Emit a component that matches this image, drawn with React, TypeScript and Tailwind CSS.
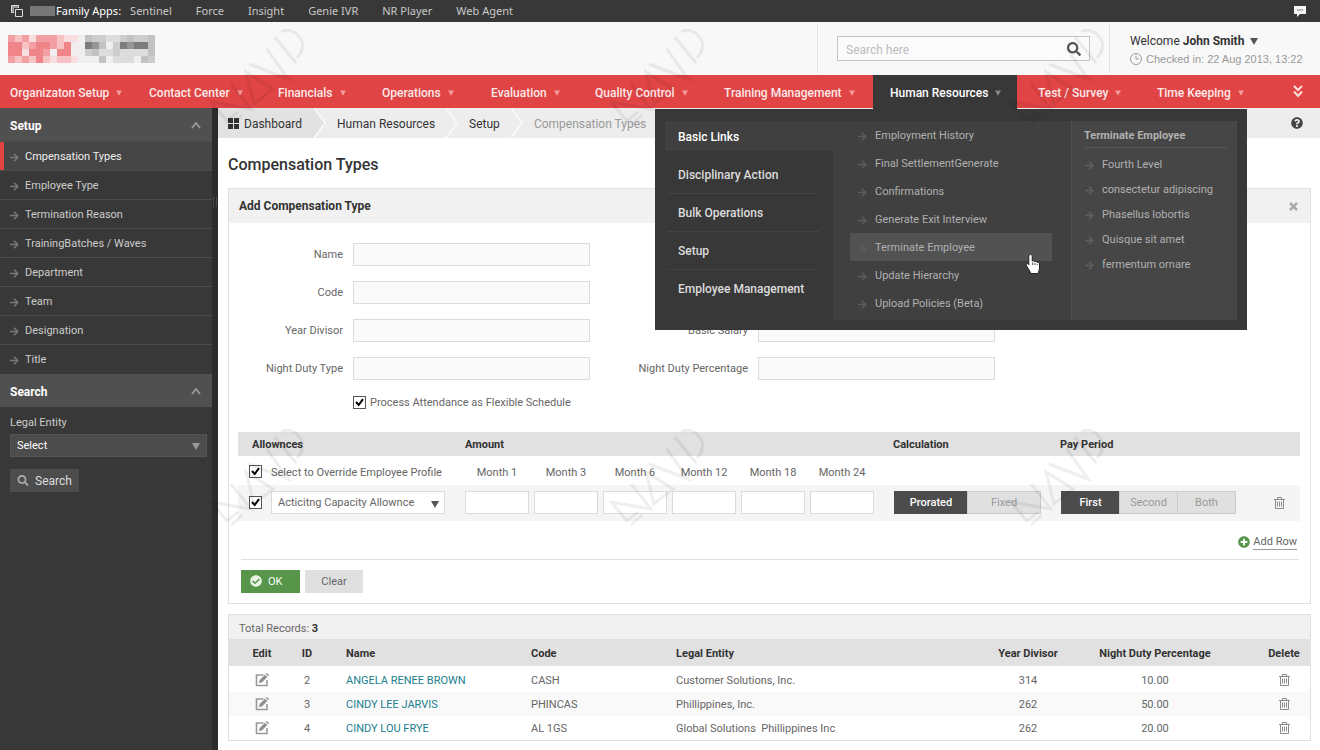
import type { ReactNode } from "react"
import { FaCheckCircle, FaPlusCircle, FaQuestionCircle, FaSearch } from "react-icons/fa"

const FAMILY_APPS = ["Sentinel", "Force", "Insight", "Genie IVR", "NR Player", "Web Agent"]

const NAV = [
  "Organizaton Setup",
  "Contact Center",
  "Financials",
  "Operations",
  "Evaluation",
  "Quality Control",
  "Training Management",
  "Human Resources",
  "Test / Survey",
  "Time Keeping",
]

const SIDEBAR = [
  "Cmpensation Types",
  "Employee Type",
  "Termination Reason",
  "TrainingBatches / Waves",
  "Department",
  "Team",
  "Designation",
  "Title",
]

const MENU_GROUPS = ["Disciplinary Action", "Bulk Operations", "Setup", "Employee Management"]

const MENU_LINKS = [
  "Employment History",
  "Final SettlementGenerate",
  "Confirmations",
  "Generate Exit Interview",
  "Terminate Employee",
  "Update Hierarchy",
  "Upload Policies (Beta)",
]

const FOURTH_LEVEL = [
  "Fourth Level",
  "consectetur adipiscing",
  "Phasellus lobortis",
  "Quisque sit amet",
  "fermentum ornare",
]

const MONTHS = ["Month 1", "Month 3", "Month 6", "Month 12", "Month 18", "Month 24"]

const RECORDS = [
  { id: 2, name: "ANGELA RENEE BROWN", code: "CASH", entity: "Customer Solutions, Inc.", divisor: "314", night: "10.00" },
  { id: 3, name: "CINDY LEE JARVIS", code: "PHINCAS", entity: "Phillippines, Inc.", divisor: "262", night: "50.00" },
  { id: 4, name: "CINDY LOU FRYE", code: "AL 1GS", entity: "Global Solutions  Phillippines Inc", divisor: "262", night: "20.00" },
]

// one string per row of logo blocks, each character is a tone
const LOGO_ROWS = [
  "bcbdbbbcddefgghhgfggf",
  "aacbaabcaeejifegjijjf",
  "aadaabeaaeegfhhghhhhf",
  "bcbcacdccdeeefehhhefg",
]

const LOGO_TONES: Record<string, string> = {
  a: "#ef8588",
  b: "#f2a0a3",
  c: "#f6c2c4",
  d: "#f9dedf",
  e: "#f0eeee",
  f: "#c2c2c2",
  g: "#cdcdcd",
  h: "#dddddd",
  i: "#969696",
  j: "#7c7c7c",
}

function Caret({ className = "" }: { className?: string }) {
  return (
    <svg viewBox="0 0 8 7" className={`shrink-0 fill-current ${className}`} aria-hidden="true">
      <path d="M0 0h8L4 7z" />
    </svg>
  )
}

function Arrow({ className = "" }: { className?: string }) {
  return (
    <svg
      viewBox="0 0 9 9"
      className={`h-[9px] w-[9px] shrink-0 fill-none stroke-current ${className}`}
      strokeWidth="1.6"
      aria-hidden="true"
    >
      <path d="M0 4.5h7.5M4 .8l3.7 3.7L4 8.2" />
    </svg>
  )
}

function Trash() {
  return (
    <svg viewBox="0 0 11 12" className="h-3 w-[11px] fill-none stroke-[#8a8a8a]" aria-hidden="true">
      <path d="M0 2.5h11M3.5 2.5v-2h4v2M1.5 2.5v9h8v-9M3.5 4.5v5M5.5 4.5v5M7.5 4.5v5" />
    </svg>
  )
}

function EditIcon() {
  return (
    <svg viewBox="0 0 14 14" className="h-3.5 w-3.5" aria-hidden="true">
      <path d="M8.500 2H1.500v10.500H12V7" fill="none" stroke="#999" strokeWidth="1.600" />
      <path d="M4 10l.6-2.900L10 1.700l2.300 2.300-5.400 5.400zM10.800.9l.9-.9L14 2.300l-.9.900z" fill="#8f8f8f" />
    </svg>
  )
}

function Checkbox({ id, label }: { id: string; label?: string }) {
  return (
    <span className="relative block h-[13px] w-[13px] shrink-0">
      <input
        id={id}
        type="checkbox"
        defaultChecked
        aria-label={label}
        className="peer block h-[13px] w-[13px] appearance-none border border-[#555] bg-white"
      />
      <svg
        viewBox="0 0 13 13"
        className="pointer-events-none absolute inset-0 hidden fill-none stroke-black peer-checked:block"
        strokeWidth="2"
        aria-hidden="true"
      >
        <path d="M3 6l2.700 3L10 3.200" />
      </svg>
    </span>
  )
}

function Field({ id, label }: { id: string; label: string }) {
  return (
    <div className="flex h-[23px] items-center gap-2.5">
      <label htmlFor={id} className="w-[114px] pt-0.5 text-right whitespace-nowrap">
        {label}
      </label>
      <input id={id} type="text" className="h-[23px] w-[237px] border border-[#dcdcdc] bg-[#fafafa] px-2" />
    </div>
  )
}

function Segments({ label, options }: { label: string; options: string[] }) {
  return (
    <div role="group" aria-label={label} className="flex h-[23px]">
      {options.map((o, i) => (
        <button
          key={o}
          type="button"
          aria-pressed={i === 0}
          className={`border pt-0.5 ${options.length === 2 ? "w-[74px]" : "w-[59px]"} ${
            i === 0
              ? "border-[#4c4c4c] bg-[#4c4c4c] font-medium text-white"
              : "-ml-px border-[#cbcbcb] bg-[#e0e0e0] text-[#999]"
          }`}
        >
          {o}
        </button>
      ))}
    </div>
  )
}

function Watermark({ className }: { className: string }) {
  return (
    <svg
      viewBox="0 0 100 100"
      className={`pointer-events-none absolute z-30 h-[100px] w-[100px] fill-none stroke-black opacity-[0.06] ${className}`}
      strokeWidth="3"
      aria-hidden="true"
    >
      <path d="M28 84L17 93 1 74l40 7-20-25M21 97l11-10" />
      <path d="M36 44l8 32 19-15z" />
      <path d="M39 36l39 15-21-30" />
      <path d="M65 9l21 26M71 4c12-6 24 7 21 17-1 5-3 7-5 9" />
    </svg>
  )
}

function TopBar() {
  return (
    <div className="flex h-[22px] items-center bg-[#383838] pr-3.5 pl-[11px] font-['Noto_Sans',sans-serif] text-[11px] text-[#c8c8c8]">
      <svg viewBox="0 0 12 12" className="h-3 w-3" aria-hidden="true">
        <path d="M3 7.500H.5v-7h7V3" fill="none" stroke="#ddd" />
        <path d="M1 1h6v2H3v4H1z" fill="#999" />
        <path d="M4.500 4.500h7v7h-7z" fill="#383838" stroke="#ddd" />
      </svg>
      <span className="ml-[7px] h-2.5 w-[25px] bg-[#777]" />
      <span className="ml-px text-white">Family Apps:</span>
      <nav aria-label="Family apps" className="ml-[9px] flex gap-6">
        {FAMILY_APPS.map((a) => (
          <a key={a} href="#">
            {a}
          </a>
        ))}
      </nav>
      <button type="button" aria-label="Messages" className="ml-auto">
        <svg viewBox="0 0 12 11" className="h-[11px] w-3" aria-hidden="true">
          <path d="M0 0h12v8H6l-3 3V8H0z" fill="#f4f4f4" />
          <path d="M3 4h1.500M5.300 4h1.500M7.600 4h1.500" stroke="#555" strokeWidth="1.200" />
        </svg>
      </button>
    </div>
  )
}

function Header() {
  return (
    <header className="flex h-[53px] items-stretch bg-[#f8f8f8] pl-2">
      <a href="#" aria-label="Home" className="self-center">
        <svg viewBox="0 0 147 28" className="h-7 w-[147px]" shapeRendering="crispEdges" aria-hidden="true">
          {LOGO_ROWS.map((row, y) =>
            row.split("").map((tone, x) => (
              <rect key={`${x}-${y}`} x={x * 7} y={y * 7} width="7" height="7" fill={LOGO_TONES[tone]} />
            )),
          )}
        </svg>
      </a>
      <div className="my-0.5 ml-auto flex items-center border-x border-[#e2e2e2] px-[19px]">
        <div className="flex h-[25px] w-[253px] items-center border border-[#c4c4c4] bg-[#fbfbfb] px-2">
          <input
            type="search"
            aria-label="Search"
            placeholder="Search here"
            className="min-w-0 flex-1 bg-transparent pt-0.5 text-xs placeholder:text-[#bbb]"
          />
          <button type="button" aria-label="Search">
            <FaSearch className="h-3.5 w-3.5 text-[#555]" />
          </button>
        </div>
      </div>
      <div className="w-[210px] pt-2.5 pl-5">
        <button type="button" className="flex h-[18px] items-center text-xs text-[#333]">
          <span>
            Welcome <b className="font-bold">John Smith</b>
          </span>
          <Caret className="ml-1.5 h-[7px] w-2 text-[#555]" />
        </button>
        <p className="flex h-[18px] items-center gap-1 font-['Liberation_Sans',sans-serif] text-[11px] whitespace-nowrap text-[#999]">
          <svg viewBox="0 0 12 12" className="h-3 w-3 fill-none stroke-[#999]" aria-hidden="true">
            <circle cx="6" cy="6" r="5.500" />
            <path d="M6 2.500V6h3" />
          </svg>
          Checked in: 22 Aug 2013, 13:22
        </p>
      </div>
    </header>
  )
}

function MegaMenu() {
  return (
    <div className="absolute top-[34px] -left-[218px] z-20 w-[592px] bg-[#383838] px-2.5 pt-3 pb-2.5 text-[11px] font-normal text-[#b0b0b0]">
      <div className="flex h-[199px]">
        <ul className="w-[168px] text-xs font-medium text-[#ddd]">
          <li className="mb-[5px] h-[30px] bg-[#404040] pl-[13px] leading-8 text-white">
            <a href="#">Basic Links</a>
          </li>
          {MENU_GROUPS.map((g) => (
            <li key={g} className="mr-3.5 ml-[3px] h-[38px] border-b border-[#444] pl-2.5 leading-[38px] last:border-0">
              <a href="#">{g}</a>
            </li>
          ))}
        </ul>
        <ul className="flex-1 bg-[#404040] pr-[19px] pl-[17px]">
          {MENU_LINKS.map((l) => (
            <li key={l} className="h-7">
              <a
                href="#"
                className={`flex h-7 items-center gap-2 pt-0.5 pl-2 ${
                  l === "Terminate Employee" ? "bg-[#525252]" : ""
                }`}
              >
                <Arrow className="text-[#5c5c5c]" />
                {l}
              </a>
            </li>
          ))}
        </ul>
        <div className="w-[166px] border-l border-[#525252] bg-[#464646] pr-2.5 pl-3">
          <h3 className="mb-1 h-[27px] border-b border-[#555] leading-[30px] font-bold">Terminate Employee</h3>
          <ul>
            {FOURTH_LEVEL.map((l) => (
              <li key={l} className="h-[25px]">
                <a href="#" className="flex h-[25px] items-center gap-2 pt-0.5 pl-px whitespace-nowrap">
                  <Arrow className="text-[#606060]" />
                  {l}
                </a>
              </li>
            ))}
          </ul>
        </div>
      </div>
      <svg viewBox="0 0 18 22" className="absolute top-[144px] left-[370px] h-[22px] w-[18px]" aria-hidden="true">
        <path
          d="M5.500 1.500c1.200 0 1.700.8 1.700 1.700v5c.3-.8 2.400-.7 2.500.6.600-.9 2.400-.6 2.500.8.800-.6 2.300-.2 2.300 1.400V15c0 2-1.200 3-1.200 5.500H5.700C5.200 17.500 1.600 14 1.200 12c-.2-1.500 1.500-1.900 2.600-.3V3.200c0-.9.5-1.700 1.700-1.700z"
          fill="#fff"
          stroke="#222"
          strokeWidth="1"
        />
        <path d="M7.700 12v-2.500M10 12v-2M12.300 12v-1" stroke="#222" strokeWidth=".8" />
      </svg>
    </div>
  )
}

function MainNav() {
  return (
    <nav aria-label="Main" className="h-[33px] bg-[#e04444] text-xs font-medium text-[#fbe9e9]">
      <ul className="grid grid-cols-[132fr_129fr_104fr_109fr_104fr_129fr_166fr_148fr_119fr_136fr_44fr]">
        {NAV.map((n, i) => {
          const active = n === "Human Resources"
          return (
            <li key={n} className="relative">
              <a
                href="#"
                className={`flex items-center gap-[7px] pt-0.5 whitespace-nowrap ${i === 0 ? "pl-2.5" : "pl-[17px]"} ${
                  active ? "mr-1 h-[34px] bg-[#383838] text-white" : "h-[33px]"
                }`}
              >
                {n}
                <Caret className={`h-1.5 w-1.5 ${active ? "text-[#888]" : "text-[#f39a9a]"}`} />
              </a>
              {active && <MegaMenu />}
            </li>
          )
        })}
        <li className="flex h-[33px] items-center justify-center">
          <button type="button" aria-label="More modules">
            <svg viewBox="0 0 10 13" className="h-[13px] w-2.5 fill-none stroke-[#ffdede]" strokeWidth="2" aria-hidden="true">
              <path d="M1 1l4 4 4-4M1 6.500l4 4.500 4-4.500" />
            </svg>
          </button>
        </li>
      </ul>
    </nav>
  )
}

function SidebarHeading({ children }: { children: ReactNode }) {
  return (
    <h2 className="flex h-[33px] items-center justify-between bg-[#505050] pt-0.5 pr-[11px] pl-2.5 text-xs font-bold text-white">
      {children}
      <svg viewBox="0 0 10 7" className="h-[7px] w-2.5 fill-none stroke-[#999]" strokeWidth="1.800" aria-hidden="true">
        <path d="M1 6l4-5 4 5" />
      </svg>
    </h2>
  )
}

function Sidebar() {
  return (
    <aside className="flex w-[218px] shrink-0 bg-[#2b2b2b] text-[11px] text-[#ccc]">
      <div className="w-[212px] bg-[#383838]">
        <SidebarHeading>Setup</SidebarHeading>
        <ul>
          {SIDEBAR.map((s, i) => (
            <li key={s} className="h-[29px] border-t border-[#4a4a4a] last:h-[30px]">
              <a
                href="#"
                className={`flex h-7 items-center gap-1.5 pt-[3px] ${
                  i === 0 ? "border-l-4 border-[#e04444] bg-[#454545] pl-1.5 text-[#eee]" : "pl-2.5"
                }`}
              >
                <Arrow className="text-[#777]" />
                {s}
              </a>
            </li>
          ))}
        </ul>
        <SidebarHeading>Search</SidebarHeading>
        <form className="pt-1.5 pr-[5px] pl-2.5">
          <label htmlFor="legal-entity" className="block h-[21px] leading-5">
            Legal Entity
          </label>
          <div className="relative">
            <select
              id="legal-entity"
              className="block h-[23px] w-full appearance-none border border-[#555] bg-[#4c4c4c] pt-0.5 pl-1.5 text-white"
            >
              <option>Select</option>
            </select>
            <Caret className="pointer-events-none absolute top-[9px] right-[7px] h-[7px] w-2 text-[#999]" />
          </div>
          <button type="button" className="mt-3 flex h-[23px] items-center gap-1.5 bg-[#4c4c4c] px-[7px] text-xs text-[#ddd]">
            <FaSearch className="h-[11px] w-3 text-[#aaa]" />
            Search
          </button>
        </form>
      </div>
      <span className="mt-[89px] ml-px h-2.5 w-1 border-x border-[#4a4a4a]" />
    </aside>
  )
}

function CrumbArrow({ fill = "none" }: { fill?: string }) {
  return (
    <svg viewBox="0 0 12 30" className="h-[30px] w-3 shrink-0" aria-hidden="true">
      <path d="M0 0l11 15L0 30" fill={fill} stroke="#fafafa" strokeWidth="1.500" />
    </svg>
  )
}

function Breadcrumb() {
  return (
    <div className="flex h-[30px] items-center bg-[#ededed] text-xs text-[#333]">
      <nav aria-label="Breadcrumb" className="flex items-center leading-8 whitespace-nowrap">
        <a href="#" className="flex h-[30px] items-center gap-[5px] bg-[#e2e2e2] pr-3 pl-2.5">
          <svg viewBox="0 0 11 11" className="h-[11px] w-[11px] fill-[#333]" aria-hidden="true">
            <path d="M0 0h5v5H0zM6 0h5v5H6zM0 6h5v5H0zM6 6h5v5H6z" />
          </svg>
          <span className="pt-0.5">Dashboard</span>
        </a>
        <CrumbArrow fill="#e2e2e2" />
        <a href="#" className="px-[11px] pt-0.5">
          Human Resources
        </a>
        <CrumbArrow />
        <a href="#" className="px-[11px] pt-0.5">
          Setup
        </a>
        <CrumbArrow />
        <span className="pt-0.5 pl-[11px] text-[#999]">Compensation Types</span>
      </nav>
      <button type="button" aria-label="Help" className="mr-[17px] ml-auto">
        <FaQuestionCircle className="h-3 w-3 text-[#444]" />
      </button>
    </div>
  )
}

function Allowances() {
  return (
    <table className="mx-[9px] w-[1062px] table-fixed">
      <colgroup>
        <col className="w-[33px]" />
        <col className="w-[194px]" />
        {MONTHS.map((m) => (
          <col key={m} className="w-[69px]" />
        ))}
        <col className="w-[181px]" />
        <col />
        <col className="w-10" />
      </colgroup>
      <thead>
        <tr className="h-6 bg-[#e1e1e1] text-left text-[#333]">
          <th colSpan={2} className="pt-[3px] pl-3.5 font-bold">
            Allownces
          </th>
          <th colSpan={6} className="pt-[3px] font-bold">
            Amount
          </th>
          <th className="pt-[3px] pl-3.5 font-bold">Calculation</th>
          <th colSpan={2} className="pt-[3px] font-bold">
            Pay Period
          </th>
        </tr>
      </thead>
      <tbody>
        <tr className="h-[29px]">
          <td className="pt-0.5 pl-[11px]">
            <Checkbox id="override" />
          </td>
          <td className="pt-1.5">
            <label htmlFor="override">Select to Override Employee Profile</label>
          </td>
          {MONTHS.map((m) => (
            <td key={m} className="pt-1.5 pr-[5px] text-center">
              {m}
            </td>
          ))}
        </tr>
        <tr className="h-9 bg-[#f5f5f5]">
          <td className="pl-[11px]">
            <Checkbox id="row-1" label="Include row" />
          </td>
          <td>
            <div className="relative w-[174px]">
              <select
                aria-label="Allowance"
                className="block h-[23px] w-full appearance-none border border-[#dcdcdc] bg-white pt-0.5 pl-1.5"
              >
                <option>Acticitng Capacity Allownce</option>
              </select>
              <Caret className="pointer-events-none absolute top-[10px] right-1.5 h-[7px] w-2 text-[#555]" />
            </div>
          </td>
          {MONTHS.map((m) => (
            <td key={m}>
              <input type="text" aria-label={m} className="block h-[23px] w-16 border border-[#dcdcdc] bg-white px-1" />
            </td>
          ))}
          <td className="pl-[15px]">
            <Segments label="Calculation" options={["Prorated", "Fixed"]} />
          </td>
          <td className="pl-px">
            <Segments label="Pay period" options={["First", "Second", "Both"]} />
          </td>
          <td>
            <button type="button" aria-label="Delete row" className="mx-auto block">
              <Trash />
            </button>
          </td>
        </tr>
      </tbody>
    </table>
  )
}

function CompensationForm() {
  return (
    <form className="border border-[#e0e0e0] bg-white">
      <div className="flex h-[34px] items-center justify-between bg-[#f1f1f1] pr-3 pl-2.5">
        <h2 className="text-xs font-bold text-[#333]">Add Compensation Type</h2>
        <button type="button" aria-label="Close">
          <svg viewBox="0 0 9 9" className="h-[9px] w-[9px] stroke-[#aaa]" strokeWidth="2.500" aria-hidden="true">
            <path d="M1 1l7 7M8 1L1 8" />
          </svg>
        </button>
      </div>
      <div className="flex items-end gap-11 pt-5">
        <div className="flex flex-col gap-[15px]">
          <Field id="name" label="Name" />
          <Field id="code" label="Code" />
          <Field id="year-divisor" label="Year Divisor" />
          <Field id="night-type" label="Night Duty Type" />
        </div>
        <div className="flex flex-col gap-[15px]">
          <Field id="basic-salary" label="Basic Salary" />
          <Field id="night-percentage" label="Night Duty Percentage" />
        </div>
      </div>
      <div className="mt-[13px] ml-[124px] flex items-center gap-1">
        <Checkbox id="flexible" />
        <label htmlFor="flexible" className="pt-0.5">
          Process Attendance as Flexible Schedule
        </label>
      </div>
      <div className="mt-5">
        <Allowances />
      </div>
      <div className="ml-3 mr-[11px] flex h-[39px] items-center justify-end border-b border-[#e0e0e0] pt-[5px] pr-0.5">
        <button type="button" className="flex items-center gap-[3px]">
          <FaPlusCircle className="h-3 w-3 text-[#56954a]" />
          <span className="border-b border-[#999] leading-[14px]">Add Row</span>
        </button>
      </div>
      <div className="flex gap-[5px] py-2.5 pl-3">
        <button type="submit" className="flex h-[23px] w-[59px] items-center gap-1.5 bg-[#56954a] pl-[9px] text-white">
          <FaCheckCircle className="h-3 w-3 text-[#e6f3e3]" />
          <span className="pt-0.5">OK</span>
        </button>
        <button type="reset" className="h-[23px] w-[58px] bg-[#e0e0e0] pt-0.5 text-[#666]">
          Clear
        </button>
      </div>
    </form>
  )
}

function Records() {
  return (
    <section className="mt-2.5 border border-[#e0e0e0] bg-white">
      <p className="h-6 bg-[#f1f1f1] pl-2.5 leading-7">
        Total Records: <b className="text-[#333]">3</b>
      </p>
      <table className="w-full table-fixed">
        <colgroup>
          <col className="w-[54px]" />
          <col className="w-12" />
          <col className="w-[185px]" />
          <col className="w-[145px]" />
          <col />
          <col className="w-[118px]" />
          <col className="w-[136px]" />
          <col className="w-[87px]" />
        </colgroup>
        <thead>
          <tr className="h-[27px] bg-[#e1e1e1] text-left whitespace-nowrap text-[#333]">
            <th className="pt-1 pl-3 text-center font-bold">Edit</th>
            <th className="pt-1 text-center font-bold">ID</th>
            <th className="pt-1 pl-[15px] font-bold">Name</th>
            <th className="pt-1 pl-[15px] font-bold">Code</th>
            <th className="pt-1 pl-[15px] font-bold">Legal Entity</th>
            <th className="pt-1 text-center font-bold">Year Divisor</th>
            <th className="pt-1 text-center font-bold">Night Duty Percentage</th>
            <th className="pt-1 pl-[35px] text-center font-bold">Delete</th>
          </tr>
        </thead>
        <tbody className="before:block before:h-0.5">
          {RECORDS.map((r) => (
            <tr key={r.id} className="h-6 even:bg-[#f9f9f9]">
              <td className="pl-3">
                <button type="button" aria-label={`Edit ${r.name}`} className="mx-auto block">
                  <EditIcon />
                </button>
              </td>
              <td className="pt-1 text-center">{r.id}</td>
              <td className="pt-1 pl-[15px]">
                <a href="#" className="text-[#21808f]">
                  {r.name}
                </a>
              </td>
              <td className="pt-1 pl-[15px]">{r.code}</td>
              <td className="pt-1 pl-[15px] whitespace-pre">{r.entity}</td>
              <td className="pt-1 text-center">{r.divisor}</td>
              <td className="pt-1 text-center">{r.night}</td>
              <td className="pl-[35px]">
                <button type="button" aria-label={`Delete ${r.name}`} className="mx-auto block">
                  <Trash />
                </button>
              </td>
            </tr>
          ))}
        </tbody>
      </table>
    </section>
  )
}

export default function App() {
  return (
    <div className="relative flex min-h-screen flex-col overflow-hidden bg-white font-[Roboto,sans-serif] text-[11px] text-[#666]">
      <TopBar />
      <Header />
      <MainNav />
      <div className="flex flex-1">
        <Sidebar />
        <main className="min-w-0 flex-1">
          <Breadcrumb />
          <div className="pr-[9px] pb-2.5 pl-2.5">
            <h1 className="h-[50px] text-base leading-[54px] font-medium text-[#333]">Compensation Types</h1>
            <CompensationForm />
            <Records />
          </div>
        </main>
      </div>
      <Watermark className="top-[28px] left-[210px]" />
      <Watermark className="top-[28px] left-[610px]" />
      <Watermark className="top-[28px] left-[1010px]" />
      <Watermark className="top-[428px] left-[210px]" />
      <Watermark className="top-[428px] left-[610px]" />
      <Watermark className="top-[428px] left-[1010px]" />
    </div>
  )
}
